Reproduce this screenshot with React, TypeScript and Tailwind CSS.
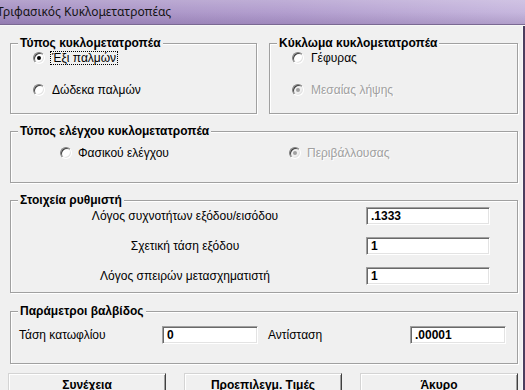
import React from "react";

function Radio({ checked, disabled }: { checked?: boolean; disabled?: boolean }) {
  return (
    <span
      className={`flex h-[12px] w-[12px] shrink-0 items-center justify-center rounded-full border border-t-[#808080] border-l-[#808080] border-r-white border-b-white shadow-[inset_1px_1px_0_#404040,inset_-1px_-1px_0_#e3e3e3] ${
        disabled ? "bg-[#f0f0f0]" : "bg-white"
      }`}
    >
      {checked && (
        <span className={`h-[4px] w-[4px] rounded-full ${disabled ? "bg-[#a0a0a0]" : "bg-black"}`} />
      )}
    </span>
  );
}

function Group({
  title,
  className,
  children,
}: {
  title: string;
  className: string;
  children: React.ReactNode;
}) {
  return (
    <div
      className={`flex shrink-0 flex-col border border-[#a0a0a0] px-[7px] shadow-[inset_1px_1px_0_#ffffff,1px_1px_0_#ffffff] ${className}`}
    >
      <div className="-mt-[8px] h-[14px] w-fit bg-[#f0f0f0] px-[2px] font-bold leading-[14px]">{title}</div>
      {children}
    </div>
  );
}

function Field({ value, className }: { value: string; className: string }) {
  return (
    <div
      className={`flex h-[18px] shrink-0 items-center border border-t-[#a0a0a0] border-l-[#a0a0a0] border-r-white border-b-white bg-white pl-[4px] font-bold shadow-[inset_1px_1px_0_#696969,inset_-1px_-1px_0_#e3e3e3] ${className}`}
    >
      {value}
    </div>
  );
}

function Button({ label }: { label: string }) {
  return (
    <div className="flex h-[24px] w-[158px] shrink-0 items-center justify-center border border-t-[#d4d4d4] border-l-[#d4d4d4] border-r-[#404040] border-b-[#404040] bg-[#f0f0f0] font-bold shadow-[inset_1px_1px_0_#ffffff,inset_-1px_-1px_0_#a0a0a0]">
      {label}
    </div>
  );
}

export default function App() {
  return (
    <div className="flex h-[390px] w-[525px] flex-col overflow-hidden bg-[#f0f0f0] font-['Liberation_Sans',Arial,sans-serif] text-[12px] leading-[14px] text-black">
      <div className="flex h-[24px] shrink-0 items-center bg-[linear-gradient(to_bottom,rgba(255,255,255,0.2),rgba(255,255,255,0.04)_50%,rgba(60,30,90,0.14)),linear-gradient(to_right,#a28cc0,#b09bcd_55%,#c5b5dd)]">
        <span className="ml-[-3px] font-['Noto_Sans',sans-serif] text-[12px] text-[#141414]">
          Τριφασικός Κυκλομετατροπέας
        </span>
      </div>
      <div className="h-[1px] shrink-0 bg-[#7a6992]" />
      <div className="h-[1px] shrink-0 bg-[#f7f7f7]" />
      <div className="flex min-h-0 flex-1">
        <div className="flex flex-1 flex-col pl-[10px] pt-[17px]">
          <div className="flex w-[508px] gap-[12px]">
            <Group title="Τύπος κυκλομετατροπέα" className="h-[71px] w-[247px]">
              <div className="flex flex-col gap-[16px] pl-[15px]">
                <div className="flex h-[16px] items-center">
                  <Radio checked />
                  <span className="ml-[5px] border border-dotted border-black px-[1px] leading-[12px]">
                    Έξι παλμών
                  </span>
                </div>
                <div className="flex h-[16px] items-center">
                  <Radio />
                  <span className="ml-[7px]">Δώδεκα παλμών</span>
                </div>
              </div>
            </Group>
            <Group title="Κύκλωμα κυκλομετατροπέα" className="h-[71px] w-[249px]">
              <div className="flex flex-col gap-[16px] pl-[15px]">
                <div className="flex h-[16px] items-center">
                  <Radio />
                  <span className="ml-[7px]">Γέφυρας</span>
                </div>
                <div className="flex h-[16px] items-center">
                  <Radio checked disabled />
                  <span className="ml-[7px] text-[#a0a0a0] [text-shadow:1px_1px_0_#ffffff]">
                    Μεσαίας λήψης
                  </span>
                </div>
              </div>
            </Group>
          </div>

          <Group title="Τύπος ελέγχου κυκλομετατροπέα" className="mt-[17px] h-[52px] w-[508px]">
            <div className="mt-[7px] flex h-[16px] items-center pl-[42px]">
              <div className="flex w-[229px] items-center">
                <Radio />
                <span className="ml-[6px]">Φασικού ελέγχου</span>
              </div>
              <div className="flex items-center">
                <Radio checked disabled />
                <span className="ml-[6px] text-[#a0a0a0] [text-shadow:1px_1px_0_#ffffff]">
                  Περιβάλλουσας
                </span>
              </div>
            </div>
          </Group>

          <Group title="Στοιχεία ρυθμιστή" className="mt-[17px] h-[93px] w-[508px]">
            <div className="flex flex-col gap-[12px]">
              <div className="flex h-[18px] items-center">
                <span className="w-[334px] text-center">Λόγος συχνοτήτων εξόδου/εισόδου</span>
                <Field value=".1333" className="ml-[14px] w-[124px]" />
              </div>
              <div className="flex h-[18px] items-center">
                <span className="w-[334px] text-center">Σχετική τάση εξόδου</span>
                <Field value="1" className="ml-[14px] w-[124px]" />
              </div>
              <div className="flex h-[18px] items-center">
                <span className="w-[334px] text-center">Λόγος σπειρών μετασχηματιστή</span>
                <Field value="1" className="ml-[14px] w-[124px]" />
              </div>
            </div>
          </Group>

          <Group title="Παράμετροι βαλβίδος" className="mt-[18px] h-[53px] w-[508px]">
            <div className="mt-[8px] flex h-[18px] items-center">
              <span className="ml-[1px] w-[143px]">Τάση κατωφλίου</span>
              <Field value="0" className="w-[96px]" />
              <span className="ml-[10px] w-[142px]">Αντίσταση</span>
              <Field value=".00001" className="w-[96px]" />
            </div>
          </Group>

          <div className="ml-[-2px] mt-[9px] flex gap-[18px]">
            <Button label="Συνέχεια" />
            <Button label="Προεπιλεγμ. Τιμές" />
            <Button label="Άκυρο" />
          </div>
        </div>
        <div className="w-[1px] shrink-0 bg-[#f7f7f7]" />
        <div className="w-[2px] shrink-0 bg-[#4b3d5e]" />
      </div>
    </div>
  );
}
